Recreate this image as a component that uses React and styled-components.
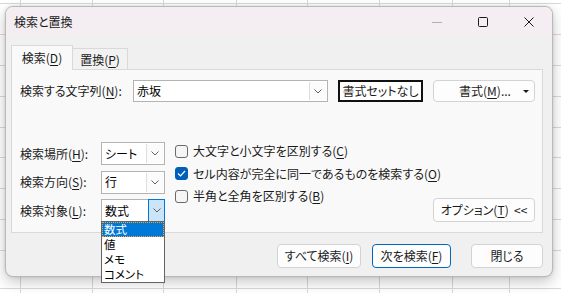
import React from 'react'
import styled, { createGlobalStyle } from 'styled-components'

const GlobalStyle = createGlobalStyle`
    html, body {
        margin: 0;
        padding: 0;
    }
    body {
        font-family: "Noto Sans CJK JP", "Noto Sans", sans-serif;
        font-size: 12px;
        font-feature-settings: "palt";
        color: #1a1a1a;
    }
    * {
        box-sizing: border-box;
    }
`

const COLS = [20, 92, 163, 236, 307, 379, 452, 509]
const ROWS = [3, 34, 65, 96, 127, 157, 188, 219, 250, 288]
const gridLayers = [
    ...COLS.map(() => 'linear-gradient(#d9d9d9, #d9d9d9)'),
    ...ROWS.map(() => 'linear-gradient(#d9d9d9, #d9d9d9)'),
].join(', ')
const gridSizes = [
    ...COLS.map(() => '1px 100%'),
    ...ROWS.map(() => '100% 1px'),
].join(', ')
const gridPositions = [
    ...COLS.map(x => `${x}px 0`),
    ...ROWS.map(y => `0 ${y}px`),
].join(', ')

function Chevron() {
    return (
        <svg width="8" height="5" viewBox="0 0 8 5">
            <polyline points="0.5,0.5 4,4 7.5,0.5" fill="none" stroke="#606060" strokeWidth="1" />
        </svg>
    )
}

function Combo({ value, width, active, children }) {
    return (
        <ComboBox $width={width}>
            <ComboText>{value}</ComboText>
            <ChevronBox $active={active}><Chevron /></ChevronBox>
            {children}
        </ComboBox>
    )
}

function Check({ checked, children }) {
    return (
        <CheckRow>
            <CheckMark $checked={checked}>
                {checked && (
                    <svg width="9" height="7" viewBox="0 0 9 7">
                        <polyline points="1,3.5 3.5,6 8,1" fill="none" stroke="#fff" strokeWidth="1.2" />
                    </svg>
                )}
            </CheckMark>
            <span>{children}</span>
        </CheckRow>
    )
}

function App() {
    return (
        <Sheet>
            <GlobalStyle />
            <Dialog>
                <TitleBar>
                    <Title>検索と置換</Title>
                    <WinButtons>
                        <WinButton>
                            <svg width="10" height="10" viewBox="0 0 10 10">
                                <line x1="0" y1="5.5" x2="10" y2="5.5" stroke="#b0b0b0" strokeWidth="1" />
                            </svg>
                        </WinButton>
                        <WinButton>
                            <svg width="10" height="10" viewBox="0 0 10 10">
                                <rect x="0.5" y="0.5" width="9" height="9" rx="1" fill="none" stroke="#1a1a1a" strokeWidth="1" />
                            </svg>
                        </WinButton>
                        <WinButton>
                            <svg width="10" height="10" viewBox="0 0 10 10">
                                <path d="M0.5 0.5 L9.5 9.5 M9.5 0.5 L0.5 9.5" stroke="#1a1a1a" strokeWidth="1" />
                            </svg>
                        </WinButton>
                    </WinButtons>
                </TitleBar>

                <Body>
                    <TabRow>
                        <Tab $selected>検索(<U>D</U>)</Tab>
                        <Tab>置換(<U>P</U>)</Tab>
                    </TabRow>

                    <Panel>
                        <TopRow>
                            <Label $width={113}>検索する文字列(<U>N</U>):</Label>
                            <Combo value="赤坂" width={195} />
                            <FormatNone>書式セットなし</FormatNone>
                            <PushButton $width={102} $menu>
                                <span>書式(<U>M</U>)...</span>
                                <MenuArrow />
                            </PushButton>
                        </TopRow>

                        <LowerRow>
                            <FieldGrid>
                                <Label>検索場所(<U>H</U>):</Label>
                                <Combo value="シート" width={64} />
                                <Label>検索方向(<U>S</U>):</Label>
                                <Combo value="行" width={64} />
                                <Label>検索対象(<U>L</U>):</Label>
                                <Combo value="数式" width={64} active>
                                    <ListBox>
                                        <ListItem $selected>数式</ListItem>
                                        <ListItem>値</ListItem>
                                        <ListItem>メモ</ListItem>
                                        <ListItem>コメント</ListItem>
                                    </ListBox>
                                </Combo>
                            </FieldGrid>

                            <CheckColumn>
                                <Check>大文字と小文字を区別する(<U>C</U>)</Check>
                                <Check checked>セル内容が完全に同一であるものを検索する(<U>O</U>)</Check>
                                <Check>半角と全角を区別する(<U>B</U>)</Check>
                            </CheckColumn>

                            <OptionButton $width={102}>オプション(<U>T</U>)&nbsp;&nbsp;&lt;&lt;</OptionButton>
                        </LowerRow>
                    </Panel>

                    <Footer>
                        <PushButton $width={84}>すべて検索(<U>I</U>)</PushButton>
                        <PushButton $width={79} $default>次を検索(<U>F</U>)</PushButton>
                        <PushButton $width={72} $gap={20}>閉じる</PushButton>
                    </Footer>
                </Body>
            </Dialog>
        </Sheet>
    )
}

export default App

const Sheet = styled.div`
    width: 561px;
    height: 293px;
    overflow: hidden;
    padding: 6px 0 0 5px;
    background-color: #ffffff;
    background-image: ${gridLayers};
    background-size: ${gridSizes};
    background-position: ${gridPositions};
    background-repeat: no-repeat;
`

const Dialog = styled.div`
    width: 548px;
    height: 271px;
    border: 1px solid #b9b9b9;
    border-radius: 8px;
    background: #f0f0f0;
    box-shadow: 0 5px 14px rgba(0, 0, 0, 0.22), 0 0 3px rgba(0, 0, 0, 0.12);
    display: flex;
    flex-direction: column;
`

const TitleBar = styled.div`
    height: 30px;
    flex-shrink: 0;
    display: flex;
    align-items: center;
    background: #f4eef3;
    border-radius: 7px 7px 0 0;
    padding-left: 8px;
`

const Title = styled.div`
    font-size: 12px;
    line-height: 16px;
    color: #1a1a1a;
`

const WinButtons = styled.div`
    margin-left: auto;
    display: flex;
    height: 100%;
`

const WinButton = styled.div`
    width: 46px;
    height: 100%;
    display: flex;
    align-items: center;
    justify-content: center;
    svg {
        display: block;
    }
`

const Body = styled.div`
    flex: 1;
    padding: 8px 9px 0 5px;
    display: flex;
    flex-direction: column;
`

const TabRow = styled.div`
    height: 24px;
    display: flex;
    align-items: flex-end;
`

const Tab = styled.div`
    position: relative;
    z-index: 1;
    height: ${p => (p.$selected ? '25px' : '21px')};
    width: ${p => (p.$selected ? '62px' : '55px')};
    margin-bottom: ${p => (p.$selected ? '-1px' : '0')};
    background: ${p => (p.$selected ? '#f9f9f9' : '#f2f2f2')};
    border: 1px solid #d9d9d9;
    border-bottom: none;
    border-left: ${p => (p.$selected ? '1px solid #d9d9d9' : 'none')};
    display: flex;
    align-items: center;
    justify-content: center;
    padding-top: ${p => (p.$selected ? '0' : '1px')};
    font-size: 12px;
    line-height: 16px;
`

const U = styled.span`
    text-decoration: underline;
    text-underline-offset: 2px;
`

const Panel = styled.div`
    height: 164px;
    border: 1px solid #d9d9d9;
    background: #f9f9f9;
    padding: 10px 7px 10px 8px;
    display: flex;
    flex-direction: column;
`

const TopRow = styled.div`
    height: 22px;
    display: flex;
    align-items: center;
`

const Label = styled.div`
    width: ${p => (p.$width ? `${p.$width}px` : 'auto')};
    flex-shrink: 0;
    font-size: 12px;
    line-height: 16px;
    display: flex;
    align-items: center;
    white-space: nowrap;
`

const ComboBox = styled.div`
    position: relative;
    width: ${p => p.$width}px;
    height: 100%;
    background: #ffffff;
    border: 1px solid #b3b3b3;
    display: flex;
    align-items: stretch;
`

const ComboText = styled.div`
    flex: 1;
    padding-left: 3px;
    display: flex;
    align-items: center;
    font-size: 12px;
    line-height: 16px;
    color: #000;
`

const ChevronBox = styled.div`
    width: 17px;
    margin: ${p => (p.$active ? '-1px -1px -1px 0' : '1px 1px 1px 0')};
    background: ${p => (p.$active ? '#cce4f7' : '#fbfbfb')};
    border: ${p => (p.$active ? '1px solid #0078d7' : 'none')};
    border-left: 1px solid ${p => (p.$active ? '#0078d7' : '#dedede')};
    display: flex;
    align-items: center;
    justify-content: center;
    svg {
        display: block;
    }
`

const ListBox = styled.div`
    position: absolute;
    z-index: 5;
    top: 100%;
    left: -1px;
    width: 64px;
    border: 1px solid #646464;
    background: #ffffff;
    display: flex;
    flex-direction: column;
`

const ListItem = styled.div`
    height: 15px;
    line-height: 15px;
    padding-left: 2px;
    font-size: 11.5px;
    overflow: hidden;
    color: ${p => (p.$selected ? '#ffffff' : '#000000')};
    background: ${p => (p.$selected ? '#0078d7' : 'transparent')};
    outline: ${p => (p.$selected ? '1px dotted #f5a623' : 'none')};
    outline-offset: -1px;
`

const FormatNone = styled.div`
    width: 85px;
    height: 22px;
    margin-left: 10px;
    flex-shrink: 0;
    border: 2px solid #111111;
    background: #ffffff;
    display: flex;
    align-items: center;
    justify-content: center;
    font-size: 12px;
    line-height: 16px;
    white-space: nowrap;
`

const PushButton = styled.div`
    width: ${p => p.$width}px;
    height: ${p => (p.$menu ? '22px' : '24px')};
    margin-left: ${p => (p.$menu ? 10 : p.$gap || 11)}px;
    flex-shrink: 0;
    border: 1px solid ${p => (p.$default ? '#0067c0' : '#d3d3d3')};
    border-radius: 4px;
    background: #fdfdfd;
    display: flex;
    align-items: center;
    justify-content: center;
    font-size: 12px;
    line-height: 16px;
    white-space: nowrap;
    padding: ${p => (p.$menu ? '0 5px 0 13px' : '0')};
    span {
        flex: ${p => (p.$menu ? 1 : 'none')};
        text-align: center;
    }
`

const MenuArrow = styled.div`
    width: 0;
    height: 0;
    border-left: 3px solid transparent;
    border-right: 3px solid transparent;
    border-top: 3px solid #1a1a1a;
`

const LowerRow = styled.div`
    margin-top: 40px;
    height: 80px;
    display: flex;
    align-items: flex-start;
`

const FieldGrid = styled.div`
    display: grid;
    grid-template-columns: 81px 64px;
    grid-template-rows: 23px 23px 23px;
    row-gap: 5.5px;
`

const CheckColumn = styled.div`
    margin-left: 10px;
    margin-top: -2px;
    min-width: 0;
    display: flex;
    flex-direction: column;
`

const CheckRow = styled.div`
    height: 22.5px;
    display: flex;
    align-items: center;
    gap: 5px;
    font-size: 12px;
    line-height: 16px;
    white-space: nowrap;
`

const CheckMark = styled.div`
    width: 13px;
    height: 13px;
    flex-shrink: 0;
    border-radius: 3px;
    border: 1px solid ${p => (p.$checked ? '#005fb8' : '#6a6a6a')};
    background: ${p => (p.$checked ? '#005fb8' : '#f5f5f5')};
    display: flex;
    align-items: center;
    justify-content: center;
    svg {
        display: block;
    }
`

const OptionButton = styled(PushButton)`
    margin-left: auto;
    align-self: flex-end;
`

const Footer = styled.div`
    display: flex;
    justify-content: flex-end;
    padding: 11px 0 0 0;
`
